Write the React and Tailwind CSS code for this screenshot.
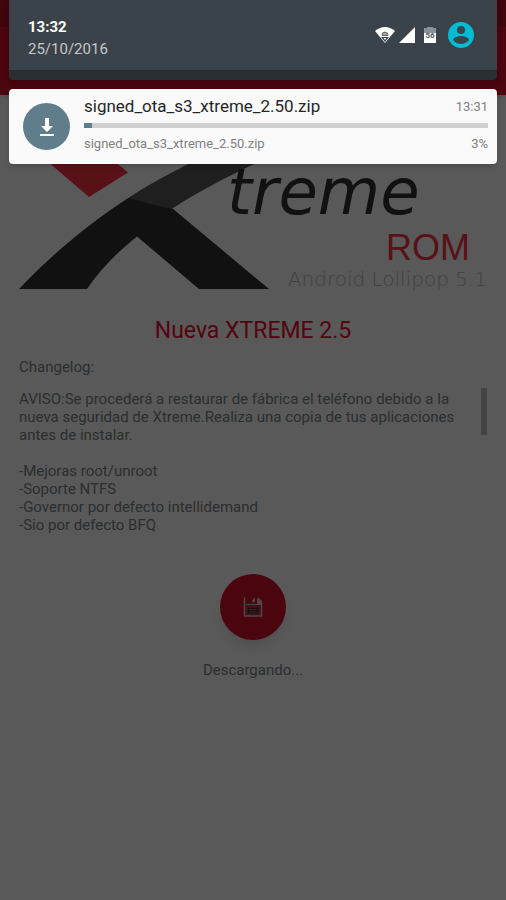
import React, { useState } from 'react';

const changelog = ['-Mejoras root/unroot', '-Soporte NTFS', '-Governor por defecto intellidemand', '-Sio por defecto BFQ'];

const WifiIcon = () => (
  <svg className="w-5 h-4" viewBox="0 0 20 16" aria-hidden="true">
    <path d="M0 4 Q10 -4 20 4 L10 16 Z" fill="#fff" />
    <path d="M7 8.5 A3 3.5 0 0 1 13 8.5 Z" fill="#a3a8ac" stroke="#5c646a" strokeWidth="1" />
    <path d="M6 10 H14 L10 15 Z" fill="#3b434a" />
    <path d="M8.5 11 H11.5 L10 13 Z" fill="#fff" />
  </svg>
);

const SignalIcon = () => (
  <svg className="w-4 h-4" viewBox="0 0 16 16" aria-hidden="true">
    <path d="M0 16 L16 0 V16 Z" fill="#fff" />
  </svg>
);

const BatteryIcon = () => (
  <svg className="w-3 h-4" viewBox="0 0 12 16" role="img" aria-label="Battery">
    <path d="M3 0 H9 V1 H12 V8 H0 V1 H3 Z" fill="#87929a" />
    <path d="M0 6 H12 V16 H0 Z" fill="#fff" />
    <text x="6" y="11" textAnchor="middle" fontSize="8" fontWeight="700" fill="#4b545b">
      56
    </text>
  </svg>
);

const UserIcon = () => (
  <svg className="w-[26px] h-[26px]" viewBox="0 0 26 26" aria-hidden="true">
    <circle cx="13" cy="13" r="13" fill="#00bcd4" />
    <circle cx="13" cy="8" r="4" fill="#3b434a" />
    <path d="M5 18 C6 15 10 14 13 14 C16 14 20 15 21 18 C19 20.500 16 22 13 22 C10 22 7 20.500 5 18 Z" fill="#3b434a" />
  </svg>
);

const DownloadIcon = () => (
  <svg className="w-4 h-5" viewBox="0 0 16 20" fill="#fff" aria-hidden="true">
    <path d="M6 1 H10 V9 H14 L8 15 L2 9 H6 Z" />
    <path d="M1 17 H15 V19 H1 Z" />
  </svg>
);

const SaveIcon = () => (
  <svg className="w-5 h-5" viewBox="0 0 20 20" fill="none" stroke="#e4c9cd" aria-hidden="true">
    <path d="M1.500 0.500 V19 H18.500 V4.500 L15 1" strokeWidth="1.500" />
    <path d="M3 7.500 H15" strokeWidth="1" />
    <path d="M8.500 5 L11 1 H12 V5 Z M14 1 L18 5 V8 H14 Z" fill="#e4c9cd" stroke="none" />
    <path d="M4 10 H16 V17 H4 Z" fill="#5e1620" stroke="#8c6a70" strokeWidth="1" />
    <path d="M6 12.500 H14 M6 15 H14" stroke="#a07c82" strokeWidth="1" />
  </svg>
);

const Logo = () => (
  <svg className="block w-full overflow-visible" viewBox="0 0 468 170" role="img" aria-label="Xtreme ROM">
    <path d="M7 24 L76 26 L109 53.500 L70 78 Z" fill="#ff3345" />
    <path d="M110 78.500 C135 62 168 45 205 28 H275 C235 44 190 66 153.500 89.500 Q130 88 110 78.500 Z" fill="#595959" />
    <path
      d="M0 170 C37 131 74 102 110 78.500 Q131 86 153.500 89.500 L250 170 H180 L118 117.500 C100 132 82 149 68 170 Z"
      fill="#313131"
    />
    <text x="208" y="95" className="font-['DejaVu_Sans'] italic text-[64px]" fill="#313131">
      treme
    </text>
    <text x="451" y="141" textAnchor="end" className="font-['Liberation_Sans'] text-[36px]" fill="#ff3345">
      ROM
    </text>
    <text x="468" y="167" textAnchor="end" className="font-['DejaVu_Sans'] font-extralight text-[20px]" fill="#bdbdbd">
      Android Lollipop 5.1
    </text>
  </svg>
);

const QuickPanel = () => (
  <header className="rounded-b-sm bg-[#292e32] pb-[10px] shadow-md">
    <div className="flex items-center justify-between bg-[#3b434a] h-[70px] pl-[19px] pr-[23px]">
      <div className="pt-[6px] text-[15px] leading-[22px]">
        <p className="font-bold text-white">13:32</p>
        <p className="text-[#c4c7c9]">25/10/2016</p>
      </div>
      <div className="flex items-center">
        <WifiIcon />
        <span className="ml-1"><SignalIcon /></span>
        <span className="ml-[9px]"><BatteryIcon /></span>
        <button className="ml-3" aria-label="User profile">
          <UserIcon />
        </button>
      </div>
    </div>
  </header>
);

const DownloadNotification = ({ file, time, progress }) => (
  <section className="mt-[9px] flex items-center rounded-sm bg-[#fafafa] h-[75px] pl-[14px] pr-[9px] shadow-md">
    <div className="flex h-[47px] w-[47px] shrink-0 items-center justify-center rounded-full bg-[#5f7d8b]">
      <DownloadIcon />
    </div>
    <div className="ml-[14px] min-w-0 flex-1 self-start pt-1">
      <div className="flex items-center justify-between">
        <h2 className="text-[17px] leading-6 text-[#262626]">{file}</h2>
        <span className="pt-[2px] text-[13px] leading-6 text-[#808080]">{time}</span>
      </div>
      <div
        className="my-1 h-[5px] bg-[#d0d0d0]"
        role="progressbar"
        aria-label={file}
        aria-valuenow={progress}
        aria-valuemin={0}
        aria-valuemax={100}
      >
        <div className="h-full bg-[#5f7d8b]" style={{ width: `${progress}%` }} />
      </div>
      <div className="flex items-center justify-between pt-[2px] text-[13px] leading-5 text-[#808080]">
        <span>{file}</span>
        <span>{Math.ceil(progress)}%</span>
      </div>
    </div>
  </section>
);

const App = () => {
  const [downloading, setDownloading] = useState(true);

  return (
    <div className="relative min-h-screen bg-white font-[Roboto,sans-serif]">
      {/* Updater screen */}
      <div className="h-[27px] bg-[#b30f26]" />
      <div className="h-[68px] bg-[#d3112b] shadow-md" />

      <main className="px-[19px] pt-6 text-[15px] text-[#7c8488]">
        <Logo />
        <h1 className="mt-[26px] text-center text-[23px] leading-8 text-[#f50a2e]">Nueva XTREME 2.5</h1>
        <h2 className="mt-2 leading-6">Changelog:</h2>
        <div className="mt-[9px] flex items-start justify-between">
          <div className="pt-[2px] leading-[18px]">
            <p>
              AVISO:Se procederá a restaurar de fábrica el teléfono debido a la nueva seguridad de
              Xtreme.Realiza una copia de tus aplicaciones antes de instalar.
            </p>
            <ul className="mt-[18px]">
              {changelog.map((line) => (
                <li key={line}>{line}</li>
              ))}
            </ul>
          </div>
          <div className="ml-4 h-[47px] w-[6px] shrink-0 bg-[#c0c0c0]" />
        </div>

        <div className="mt-10 flex flex-col items-center">
          <button
            className="flex h-[66px] w-[66px] items-center justify-center rounded-full bg-[#d3112b] shadow-lg"
            aria-label="Descargar"
            onClick={() => setDownloading(true)}
          >
            <SaveIcon />
          </button>
          {downloading && <p className="mt-[18px] leading-6">Descargando...</p>}
        </div>
      </main>

      {/* Notification shade */}
      <div className="absolute inset-0 bg-black/65 px-[9px]">
        <QuickPanel />
        <DownloadNotification file="signed_ota_s3_xtreme_2.50.zip" time="13:31" progress={2.1} />
      </div>
    </div>
  );
};

export default App;
